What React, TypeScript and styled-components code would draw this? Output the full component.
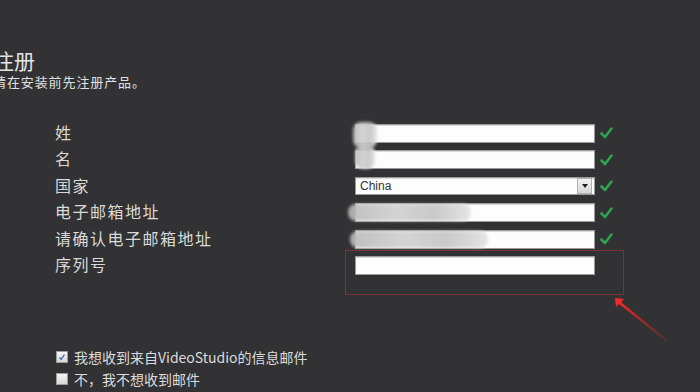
import React from 'react';
import styled, { createGlobalStyle } from 'styled-components';

const GlobalStyle = createGlobalStyle`
  html, body {
    margin: 0;
    padding: 0;
    background: #323234;
  }
  body {
    font-family: "Noto Sans CJK SC", "Noto Sans", sans-serif;
  }
`;

const Page = styled.div`
  width: 700px;
  height: 392px;
  overflow: hidden;
  background: #323234;
  color: #dcdcdc;
  position: relative;
`;

const Header = styled.div`
  padding: 48px 0 0 0;
  margin-left: -7px;
`;

const Title = styled.div`
  font-size: 21px;
  line-height: 24px;
  color: #e4e4e4;
`;

const Subtitle = styled.div`
  font-size: 13px;
  line-height: 17px;
  margin-top: 1px;
  color: #e0e0e0;
  letter-spacing: 0.9px;
`;

const Form = styled.div`
  display: grid;
  grid-template-columns: 296px 240px 20px;
  grid-auto-rows: 20px;
  row-gap: 6.6px;
  column-gap: 4px;
  margin: 33px 0 0 55px;
  align-items: center;
`;

const Label = styled.div`
  font-size: 16px;
  line-height: 20px;
  color: #dadada;
  letter-spacing: 1.5px;
  margin-top: -3px;
  white-space: nowrap;
`;

const Field = styled.div<{ $short?: boolean }>`
  position: relative;
  height: ${(p) => (p.$short ? '18px' : '19px')};
  background: #fdfdfd;
  border: 1px solid #9a9a9a;
  box-shadow: inset 0 1px 1px rgba(0, 0, 0, 0.15);
  box-sizing: border-box;
  display: flex;
  align-items: center;
  overflow: visible;
`;

const SelectText = styled.span`
  font-family: "Liberation Sans", Arial, sans-serif;
  font-size: 12px;
  color: #333;
  padding-left: 4px;
  flex: 1;
`;

const DropButton = styled.div`
  width: 13px;
  height: 14px;
  margin-right: 2px;
  background: linear-gradient(#f2f2f2, #d6d6d6);
  border: 1px solid #b0b0b0;
  display: flex;
  align-items: center;
  justify-content: center;
`;

const Arrow = styled.div`
  width: 0;
  height: 0;
  border-left: 3px solid transparent;
  border-right: 3px solid transparent;
  border-top: 4px solid #222;
`;

const Blur = styled.div<{ $w: number; $h: number; $left: number; $top: number }>`
  position: absolute;
  left: ${(p) => p.$left}px;
  top: ${(p) => p.$top}px;
  width: ${(p) => p.$w}px;
  height: ${(p) => p.$h}px;
  border-radius: 8px;
  background: linear-gradient(90deg, #b8b8b8, #d0d0d0 40%, #c4c4c4 70%, #e2e2e2);
  filter: blur(1.5px);
  opacity: 0.9;
`;

const Check = styled.svg`
  width: 13px;
  height: 12px;
  margin-left: 1px;
`;

const Annotation = styled.div`
  position: absolute;
  left: -11px;
  top: -7px;
  width: 277px;
  height: 43px;
  border: 1px solid #7a3434;
  pointer-events: none;
`;

const Pointer = styled.svg`
  position: absolute;
  left: 600px;
  top: 290px;
  width: 80px;
  height: 60px;
`;

const Options = styled.div`
  display: flex;
  flex-direction: column;
  gap: 4px;
  margin: 72px 0 0 56px;
`;

const Option = styled.label`
  display: flex;
  align-items: center;
  gap: 6px;
  font-size: 14px;
  line-height: 18px;
  color: #dcdcdc;
`;

const Box = styled.div`
  width: 10px;
  height: 10px;
  background: linear-gradient(#f4f4f4, #d8d8d8);
  border: 1px solid #9c9c9c;
  display: flex;
  align-items: center;
  justify-content: center;
`;

const CheckMark = () => (
  <Check viewBox="0 0 13 12">
    <path d="M1.5 6.5 L5 10 L11.5 1.5" stroke="#2fa24f" strokeWidth="2.6" fill="none" strokeLinecap="round" strokeLinejoin="round" />
  </Check>
);

export default function App() {
  return (
    <>
      <GlobalStyle />
      <Page>
        <Header>
          <Title>注册</Title>
          <Subtitle>请在安装前先注册产品。</Subtitle>
        </Header>
        <Form>
          <Label>姓</Label>
          <Field>
            <Blur $left={-3} $top={-3} $w={24} $h={26} />
          </Field>
          <CheckMark />

          <Label>名</Label>
          <Field>
            <Blur $left={-1} $top={-6} $w={20} $h={24} />
          </Field>
          <CheckMark />

          <Label>国家</Label>
          <Field $short>
            <SelectText>China</SelectText>
            <DropButton>
              <Arrow />
            </DropButton>
          </Field>
          <CheckMark />

          <Label>电子邮箱地址</Label>
          <Field>
            <Blur $left={-8} $top={0} $w={123} $h={17} />
          </Field>
          <CheckMark />

          <Label>请确认电子邮箱地址</Label>
          <Field>
            <Blur $left={-6} $top={0} $w={138} $h={17} />
          </Field>
          <CheckMark />

          <Label>序列号</Label>
          <Field>
            <Annotation />
          </Field>
          <div />
        </Form>
        <Pointer viewBox="0 0 80 60">
          <defs>
            <linearGradient id="ar" x1="1" y1="1" x2="0" y2="0">
              <stop offset="0" stopColor="#e02020" stopOpacity="0.3" />
              <stop offset="1" stopColor="#ff2a2a" />
            </linearGradient>
          </defs>
          <path d="M15 8 L24 9 L21 12 L67 50 L66 51 L19 14 L16 17 Z" fill="url(#ar)" />
        </Pointer>
        <Options>
          <Option>
            <Box>
              <svg width="8" height="8" viewBox="0 0 8 8">
                <path d="M1.5 4.5 L3.2 6.3 L6.5 1.5" stroke="#3b5fa8" strokeWidth="1.3" fill="none" />
              </svg>
            </Box>
            我想收到来自VideoStudio的信息邮件
          </Option>
          <Option>
            <Box />
            不，我不想收到邮件
          </Option>
        </Options>
      </Page>
    </>
  );
}
